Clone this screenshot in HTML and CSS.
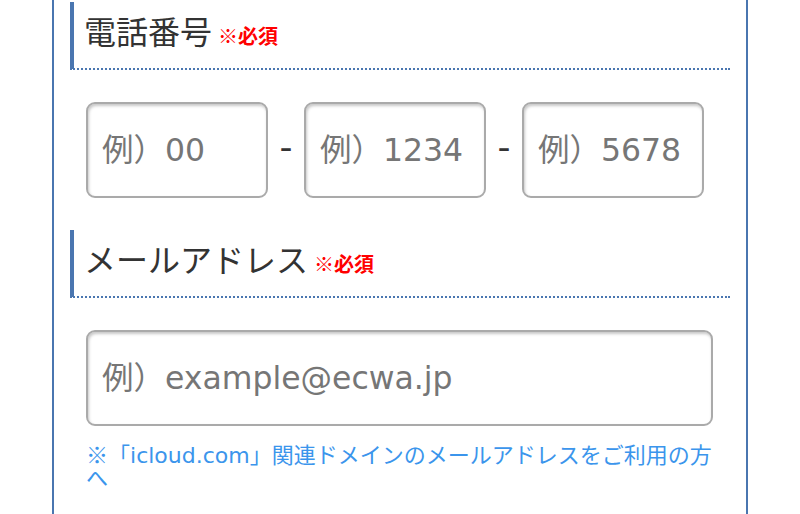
FILE: index.html
```html
<!DOCTYPE html>
<html lang="ja">
<head>
<meta charset="utf-8">
<title>お問い合わせフォーム</title>
<link rel="stylesheet" href="styles.css">
</head>
<body>
<div class="form">
  <section class="field">
    <h2 class="field-title">電話番号<span class="required">※必須</span></h2>
    <div class="tel-row">
      <input class="input input-tel" type="tel" placeholder="例）00">
      <span class="sep">-</span>
      <input class="input input-tel" type="tel" placeholder="例）1234">
      <span class="sep">-</span>
      <input class="input input-tel" type="tel" placeholder="例）5678">
    </div>
  </section>
  <section class="field">
    <h2 class="field-title">メールアドレス<span class="required">※必須</span></h2>
    <div class="field-body">
      <input class="input input-wide" type="email" placeholder="例）example@ecwa.jp">
      <p class="note"><span class="jp">※</span>「icloud.com」関連ドメインのメールアドレスをご利用の方へ</p>
    </div>
  </section>
</div>
</body>
</html>
```

FILE: styles.css
```css
html, body {
  margin: 0;
  padding: 0;
  background: #fff;
}

body {
  font-family: "Noto Sans CJK JP", sans-serif;
  color: #333;
}

.form {
  box-sizing: border-box;
  margin-left: 52px;
  width: 696px;
  min-height: 100vh;
  border-left: 2px solid #4a76b0;
  border-right: 2px solid #4a76b0;
  padding: 2px 16px 0;
}

.field + .field {
  margin-top: 32px;
}

.field-title {
  margin: 0;
  padding: 4px 0 14px 10px;
  font-size: 32px;
  line-height: 48px;
  height: 48px;
  font-weight: 400;
  color: #333;
  border-left: 4px solid #4a76b0;
  border-bottom: 2px dotted #4a76b0;
}

.required {
  margin-left: 6px;
  font-size: 20px;
  line-height: 20px;
  font-weight: 700;
  color: #f00;
}

.tel-row {
  display: flex;
  align-items: center;
  margin-top: 32px;
  padding-left: 16px;
}

.input {
  box-sizing: border-box;
  height: 96px;
  margin: 0;
  padding: 0 12px 0 14px;
  border: 2px solid #aaa;
  border-radius: 9px;
  background: #fff;
  box-shadow: inset 1px 2px 3px rgba(0, 0, 0, 0.22);
  font-family: "DejaVu Sans", "Noto Sans CJK JP", sans-serif;
  font-size: 31.5px;
  color: #333;
  outline: none;
}

.input::placeholder {
  color: #767676;
  opacity: 1;
}

.input-tel {
  width: 182px;
}

.sep {
  width: 36px;
  text-align: center;
  font-family: "DejaVu Sans", sans-serif;
  font-size: 36px;
  line-height: 1;
  color: #333;
  padding-bottom: 6px;
}

.field-body {
  margin-top: 32px;
  padding-left: 16px;
}

.input-wide {
  display: block;
  width: 627px;
}

.note {
  max-width: 627px;
  margin: 16px 0 0;
  font-family: "DejaVu Sans", "Noto Sans CJK JP", sans-serif;
  font-size: 22px;
  line-height: 23px;
  color: #3b95ec;
}

.jp {
  font-family: "Noto Sans CJK JP", sans-serif;
}
```
